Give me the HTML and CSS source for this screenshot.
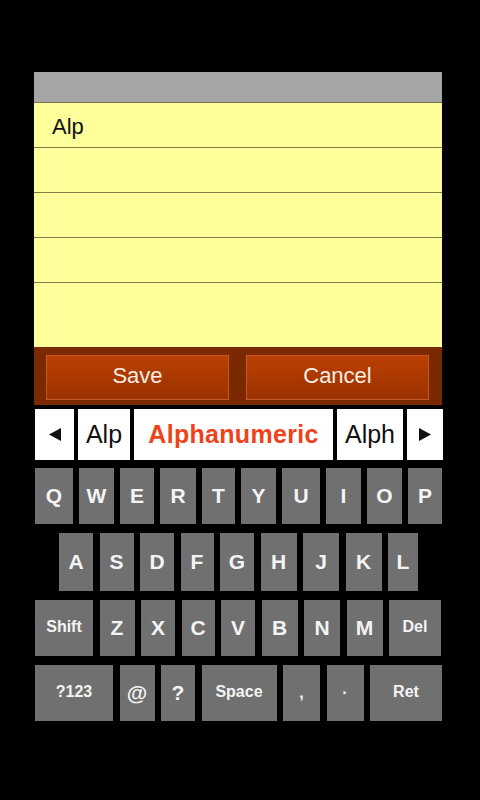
FILE: index.html
```html
<!DOCTYPE html>
<html>
<head>
<meta charset="utf-8">
<link rel="stylesheet" href="styles.css">
</head>
<body>
<div class="panel">
  <div class="titlebar"></div>
  <div class="note">
    <div class="line"><span class="note-text">Alp</span></div>
    <div class="line"></div>
    <div class="line"></div>
    <div class="line"></div>
    <div class="rest"></div>
  </div>
  <div class="actions">
    <button class="btn">Save</button>
    <button class="btn">Cancel</button>
  </div>
</div>
<div class="suggest">
  <div class="cell arrow"><svg width="14" height="13" viewBox="0 0 14 13"><polygon points="13,0 13,13 1,6.5" fill="#111"/></svg></div>
  <div class="cell word">Alp</div>
  <div class="cell word main">Alphanumeric</div>
  <div class="cell word">Alph</div>
  <div class="cell arrow"><svg width="14" height="13" viewBox="0 0 14 13"><polygon points="1,0 1,13 13,6.5" fill="#111"/></svg></div>
</div>
<div class="keyboard">
  <div class="row row1">
    <div class="key">Q</div><div class="key">W</div><div class="key">E</div><div class="key">R</div><div class="key">T</div><div class="key">Y</div><div class="key">U</div><div class="key">I</div><div class="key">O</div><div class="key">P</div>
  </div>
  <div class="row row2">
    <div class="key">A</div><div class="key">S</div><div class="key">D</div><div class="key">F</div><div class="key">G</div><div class="key">H</div><div class="key">J</div><div class="key">K</div><div class="key">L</div>
  </div>
  <div class="row row3">
    <div class="key small">Shift</div><div class="key">Z</div><div class="key">X</div><div class="key">C</div><div class="key">V</div><div class="key">B</div><div class="key">N</div><div class="key">M</div><div class="key small">Del</div>
  </div>
  <div class="row row4">
    <div class="key small">?123</div><div class="key">@</div><div class="key">?</div><div class="key small">Space</div><div class="key punct">,</div><div class="key punct">·</div><div class="key small">Ret</div>
  </div>
</div>
</body>
</html>
```

FILE: styles.css
```css
html, body {
  margin: 0;
  padding: 0;
  background: #000;
  width: 480px;
  height: 800px;
  overflow: hidden;
  font-family: "Liberation Sans", Arial, sans-serif;
}

.panel {
  margin: 72px 0 0 34px;
  width: 408px;
}

.titlebar {
  height: 30px;
  background: #a5a5a5;
  border-bottom: 1px solid #77775a;
}

.note {
  background: #ffff9c;
}

.line {
  height: 44px;
  border-bottom: 1px solid #7f7f45;
  display: flex;
  align-items: center;
}

.note-text {
  margin-left: 18px;
  margin-top: 4px;
  font-size: 22px;
  color: #111;
}

.rest {
  height: 64px;
}

.actions {
  background: #7a2900;
  display: flex;
  gap: 17px;
  padding: 8px 13px 5px 12px;
}

.btn {
  flex: 1;
  height: 45px;
  margin: 0;
  border: 1px solid #c35a26;
  background: linear-gradient(#bb4002, #9a3100);
  color: #fbeee4;
  font-family: "Liberation Sans", Arial, sans-serif;
  font-size: 22px;
  padding: 0 0 3px 0;
}

.suggest {
  margin: 4px 0 0 35px;
  width: 408px;
  height: 51px;
  display: grid;
  grid-template-columns: 39px 52px 1fr 66px 36px;
  column-gap: 4px;
}

.cell {
  background: #fff;
  display: flex;
  align-items: center;
  justify-content: center;
}

.word {
  font-size: 25px;
  color: #111;
}

.main {
  font-weight: bold;
  color: #f0421a;
  font-size: 25px;
  letter-spacing: 0.3px;
}

.keyboard {
  margin: 8px 0 0 35px;
  display: grid;
  grid-template-rows: 56px 58px 56px 56px;
  row-gap: 9px;
}

.row {
  display: grid;
}

.row1 {
  grid-template-columns: 38px 35px 34px 36px 33px 35px 38px 35px 35px 34px;
  column-gap: 6px;
}

.row2 {
  margin-left: 24px;
  grid-template-columns: 34px 34px 34px 33px 34px 36px 36px 36px 30px;
  column-gap: 6.5px;
}

.row3 {
  grid-template-columns: 58px 35px 34px 33px 34px 36px 36px 36px 52px;
  column-gap: 6.5px;
}

.row4 {
  grid-template-columns: 78px 35px 34px 75px 37px 37px 72px;
  column-gap: 6.5px;
}

.key {
  background: #707070;
  color: #f4f4f4;
  font-weight: bold;
  font-size: 21px;
  display: flex;
  align-items: center;
  justify-content: center;
}

.key.small {
  font-size: 16px;
  padding-bottom: 3px;
}

.key.punct {
  font-size: 16px;
}
```
